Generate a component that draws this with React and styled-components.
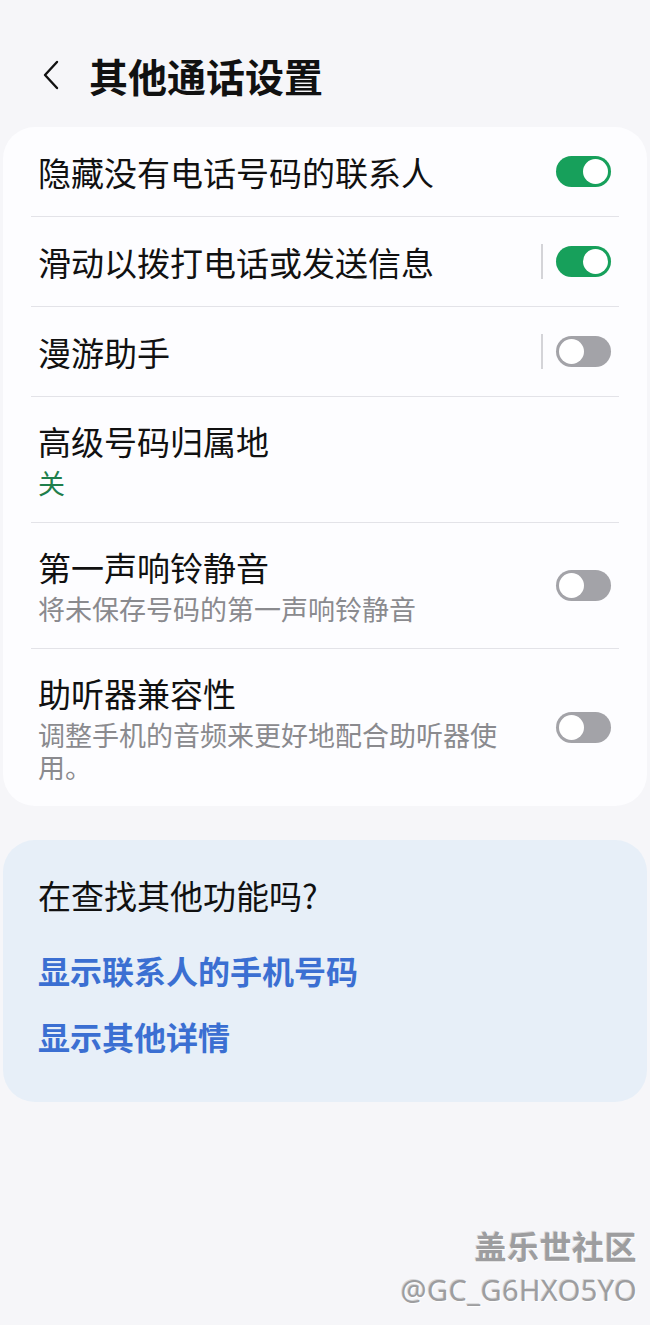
import React from "react";
import styled, { createGlobalStyle } from "styled-components";

const GlobalStyle = createGlobalStyle`
  html, body { margin: 0; padding: 0; background: #f6f6f9; }
  body { font-family: "Noto Sans CJK SC", "Noto Sans", sans-serif; }
  * { box-sizing: border-box; }
`;

const Page = styled.div`
  position: relative;
  width: 650px;
  height: 1325px;
  background: #f6f6f9;
  padding: 47px 3px 0;
  overflow: hidden;
`;

const Header = styled.div`
  display: flex;
  align-items: center;
  height: 56px;
  padding-left: 37px;
  gap: 27px;
`;

const BackButton = styled.div`
  width: 22px;
  height: 32px;
  display: flex;
  align-items: center;
  justify-content: center;
`;

const Title = styled.h1`
  margin: 0;
  font-size: 39px;
  font-weight: 700;
  color: #111;
  line-height: 56px;
`;

const Card = styled.div`
  margin-top: 24px;
  background: #fdfdff;
  border-radius: 32px;
  padding: 0 28px;
`;

const Row = styled.div`
  display: flex;
  align-items: center;
  min-height: 90px;
  padding: 23px 8px 23px 7px;
  border-bottom: ${(p) => (p.$last ? "none" : "1.5px solid #e3e3e8")};
`;

const RowText = styled.div`
  flex: 1;
  display: flex;
  flex-direction: column;
`;

const RowTitle = styled.div`
  font-size: 33px;
  line-height: 42px;
  color: #111;
`;

const RowSub = styled.div`
  margin-top: 5px;
  font-size: 27px;
  line-height: 32px;
  color: ${(p) => (p.$accent ? "#1f7f4c" : "#8a8a8e")};
  max-width: 470px;
`;

const Divider = styled.div`
  width: 2px;
  height: 35px;
  background: #d4d4d8;
  margin-right: 13px;
`;

const Track = styled.div`
  position: relative;
  width: 55px;
  height: 31px;
  border-radius: 16px;
  background: ${(p) => (p.$on ? "#17a05b" : "#a3a3a8")};
  flex-shrink: 0;
`;

const Knob = styled.div`
  position: absolute;
  top: 3px;
  left: ${(p) => (p.$on ? "27px" : "3px")};
  width: 25px;
  height: 25px;
  border-radius: 50%;
  background: #fff;
`;

const HelpCard = styled.div`
  margin-top: 34px;
  background: #e7eff8;
  border-radius: 32px;
  padding: 34px 35px 45px;
  display: flex;
  flex-direction: column;
`;

const HelpTitle = styled.div`
  font-size: 33px;
  line-height: 42px;
  color: #111;
  margin-bottom: 33px;
`;

const HelpLink = styled.div`
  font-size: 32px;
  line-height: 42px;
  font-weight: 700;
  color: #3b6fd2;
  & + & { margin-top: 24px; }
`;

const Watermark = styled.div`
  position: absolute;
  right: 13px;
  top: 1222px;
  display: flex;
  flex-direction: column;
  align-items: flex-end;
  color: #9d9d9f;
  text-shadow: 1px 1px 0 rgba(255, 255, 255, 0.9), -1px -1px 0 rgba(120, 120, 120, 0.25);
`;

const WatermarkName = styled.div`
  font-size: 32px;
  font-weight: 700;
  line-height: 46px;
  letter-spacing: 0.5px;
`;

const WatermarkId = styled.div`
  font-family: "Noto Sans", "DejaVu Sans", sans-serif;
  font-size: 29px;
  line-height: 44px;
  letter-spacing: 0.4px;
`;

const Toggle = ({ on }) => (
  <Track $on={on}>
    <Knob $on={on} />
  </Track>
);

const rows = [
  { title: "隐藏没有电话号码的联系人", toggle: true, on: true },
  { title: "滑动以拨打电话或发送信息", toggle: true, on: true, divider: true },
  { title: "漫游助手", toggle: true, on: false, divider: true },
  { title: "高级号码归属地", sub: "关", accent: true },
  { title: "第一声响铃静音", sub: "将未保存号码的第一声响铃静音", toggle: true, on: false },
  { title: "助听器兼容性", sub: "调整手机的音频来更好地配合助听器使用。", toggle: true, on: false },
];

export default function App() {
  return (
    <>
      <GlobalStyle />
      <Page>
        <Header>
          <BackButton>
            <svg width="20" height="30" viewBox="0 0 20 30" fill="none">
              <path d="M16 2 L4 15 L16 28" stroke="#111" strokeWidth="2.4" strokeLinecap="round" strokeLinejoin="round" />
            </svg>
          </BackButton>
          <Title>其他通话设置</Title>
        </Header>
        <Card>
          {rows.map((r, i) => (
            <Row key={r.title} $last={i === rows.length - 1}>
              <RowText>
                <RowTitle>{r.title}</RowTitle>
                {r.sub && <RowSub $accent={r.accent}>{r.sub}</RowSub>}
              </RowText>
              {r.divider && <Divider />}
              {r.toggle && <Toggle on={r.on} />}
            </Row>
          ))}
        </Card>
        <HelpCard>
          <HelpTitle>在查找其他功能吗?</HelpTitle>
          <HelpLink>显示联系人的手机号码</HelpLink>
          <HelpLink>显示其他详情</HelpLink>
        </HelpCard>
        <Watermark>
          <WatermarkName>盖乐世社区</WatermarkName>
          <WatermarkId>@GC_G6HXO5YO</WatermarkId>
        </Watermark>
      </Page>
    </>
  );
}
